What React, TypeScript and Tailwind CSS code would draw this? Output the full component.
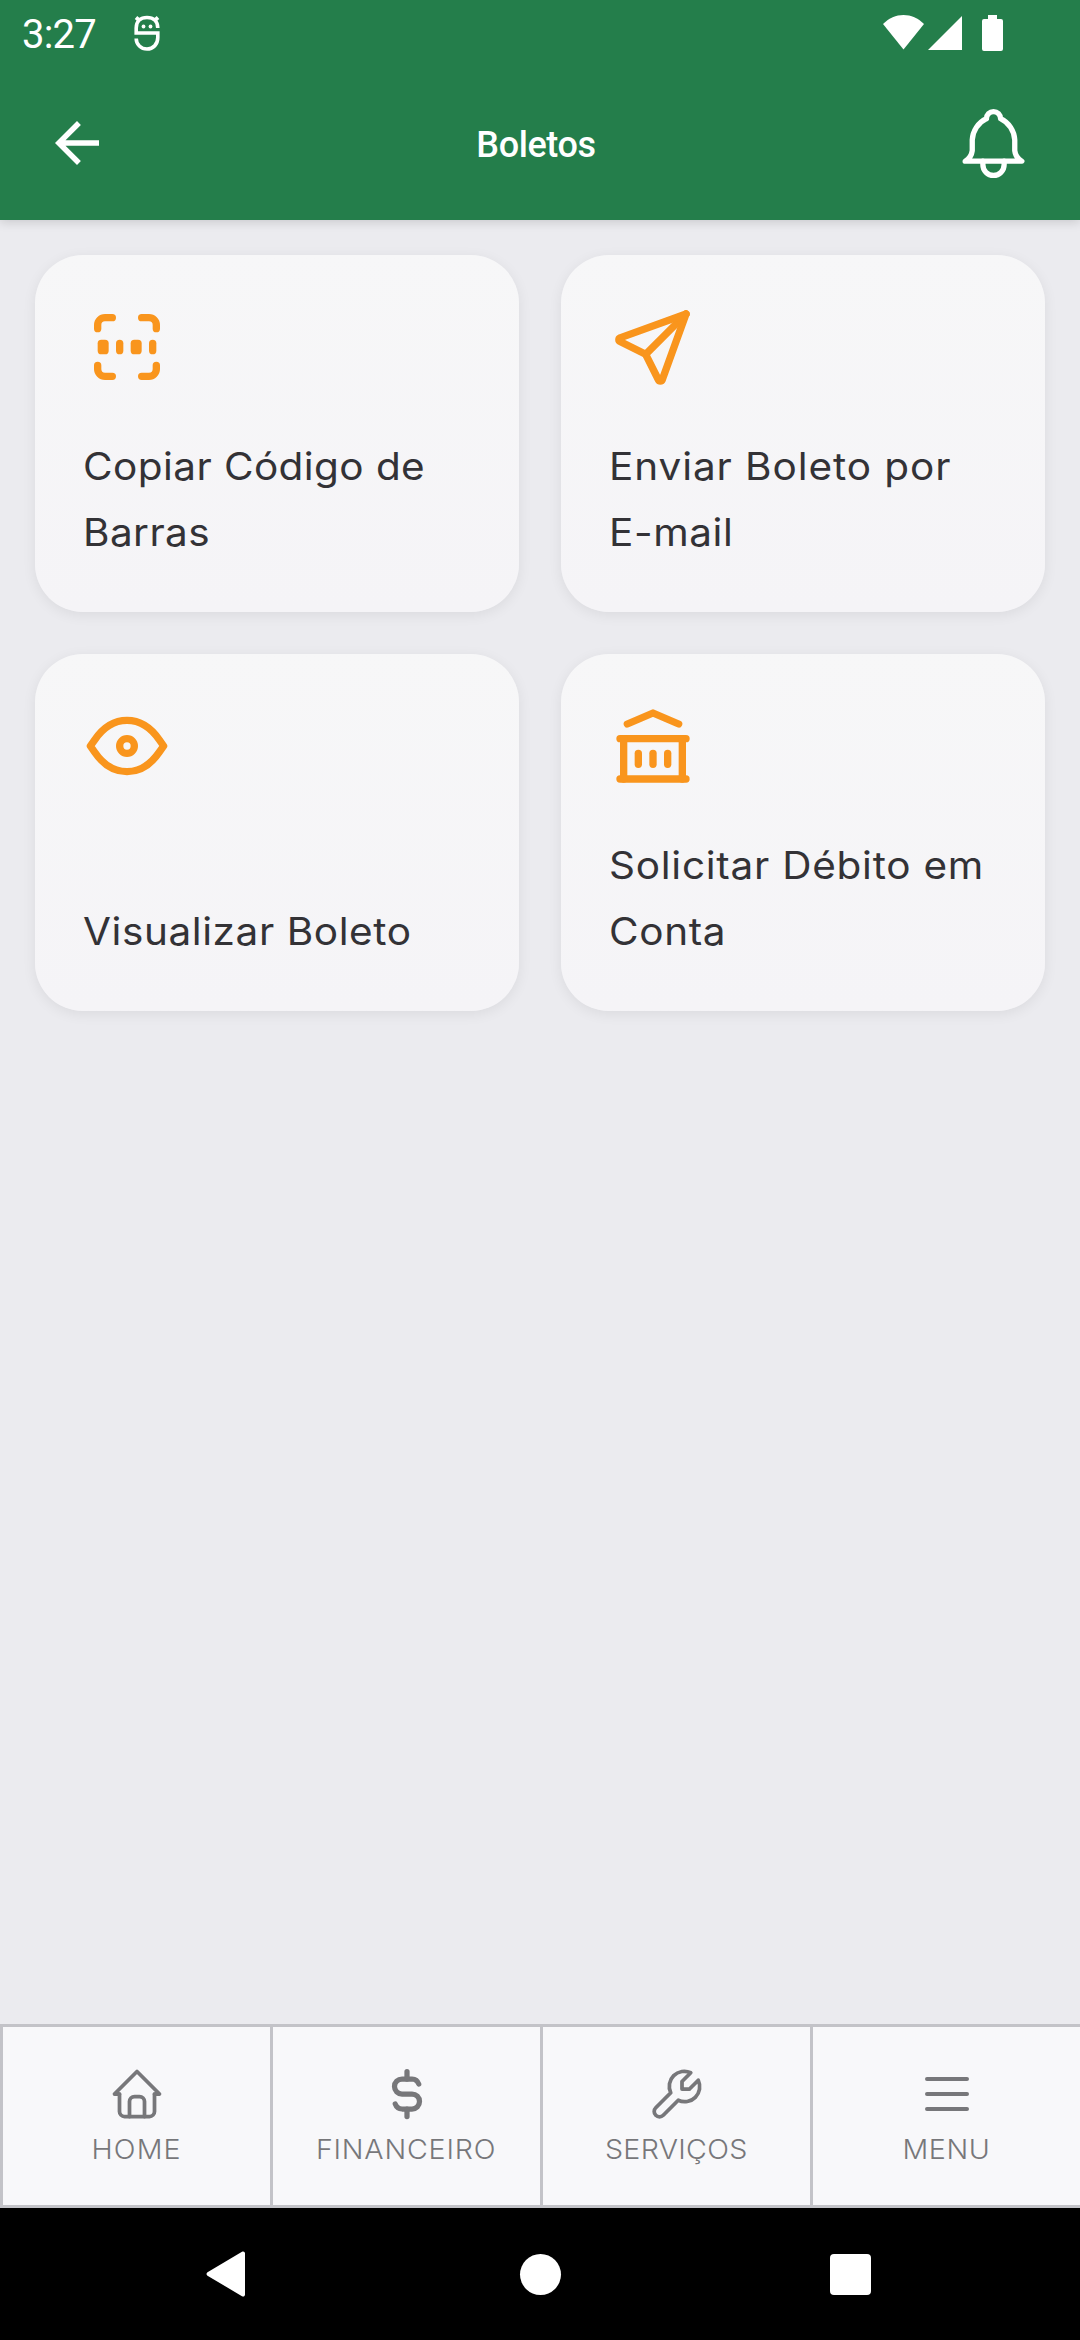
import React from 'react';

interface ICard {
    lines: { text: string; className: string }[];
    icon: React.ReactNode;
}

interface ITab {
    label: string;
    className: string;
    strokeWidth: number;
    icon: React.ReactNode;
}

const cards: ICard[] = [
    {
        lines: [
            { text: 'Copiar Código de', className: 'tracking-[0.4px]' },
            { text: 'Barras', className: 'tracking-[0.4px]' },
        ],
        icon: (
            <>
                <path d="M4 7V6a2 2 0 0 1 2-2h2" />
                <path d="M4 17v1a2 2 0 0 0 2 2h2" />
                <path d="M16 4h2a2 2 0 0 1 2 2v1" />
                <path d="M16 20h2a2 2 0 0 0 2-2v-1" />
                <path d="M5 11h1v2H5z" />
                <path d="M10 11v2" />
                <path d="M14 11h1v2h-1z" />
                <path d="M19 11v2" />
            </>
        ),
    },
    {
        lines: [
            { text: 'Enviar Boleto por', className: 'tracking-[0.85px]' },
            { text: 'E-mail', className: 'tracking-[0.55px]' },
        ],
        icon: (
            <>
                <path d="M10 14L21 3" />
                <path d="M21 3l-6.5 18a.55.55 0 0 1-1 0L10 14l-7-3.5a.55.55 0 0 1 0-1L21 3" />
            </>
        ),
    },
    {
        lines: [{ text: 'Visualizar Boleto', className: 'tracking-[0.55px]' }],
        icon: (
            <>
                <circle cx="12" cy="12" r="2" />
                <path d="M2 12l1.2-1.7C5.6 6.8 8.5 5 12 5s6.4 1.8 8.8 5.3L22 12l-1.2 1.7C18.4 17.2 15.5 19 12 19s-6.4-1.800-8.800-5.300z" />
            </>
        ),
    },
    {
        lines: [
            { text: 'Solicitar Débito em', className: 'tracking-[0.7px]' },
            { text: 'Conta', className: 'tracking-[0.6px]' },
        ],
        icon: (
            <>
                <path d="M3 21h18" />
                <path d="M3 10h18" />
                <path d="M5 6l7-3 7 3" />
                <path d="M4 10v11" />
                <path d="M20 10v11" />
                <path d="M8 14v3" />
                <path d="M12 14v3" />
                <path d="M16 14v3" />
            </>
        ),
    },
];

const tabs: ITab[] = [
    {
        label: 'HOME',
        className: 'tracking-[1.1px]',
        strokeWidth: 1.5,
        icon: (
            <>
                <path d="M5 12H3l9-9 9 9h-2" />
                <path d="M5 12v7a2 2 0 0 0 2 2h10a2 2 0 0 0 2-2v-7" />
                <path d="M9 21v-6a2 2 0 0 1 2-2h2a2 2 0 0 1 2 2v6" />
            </>
        ),
    },
    {
        label: 'FINANCEIRO',
        className: 'tracking-[0.75px]',
        strokeWidth: 2.1,
        icon: (
            <>
                <path d="M16.7 8A3 3 0 0 0 14 6h-4a3 3 0 0 0 0 6h4a3 3 0 0 1 0 6h-4a3 3 0 0 1-2.7-2" />
                <path d="M12 3v3m0 12v3" />
            </>
        ),
    },
    {
        label: 'SERVIÇOS',
        className: 'tracking-[0.3px]',
        strokeWidth: 1.5,
        icon: <path d="M17 10h-3V7l3.5-3.5a6 6 0 0 0-8 8l-6 6a2 2 0 0 0 3 3l6-6a6 6 0 0 0 8-8L17 10" />,
    },
    {
        label: 'MENU',
        className: 'tracking-[0.5px]',
        strokeWidth: 1.6,
        icon: <path d="M4 6h16M4 12h16M4 18h16" />,
    },
];

const StatusBar = () => (
    <div className="flex h-[66px] items-start justify-between pl-[22px] pr-[77px]">
        <div className="flex">
            <span className="w-[112px] pt-[11px] text-[40px] leading-[48px] tracking-[-0.8px]">3:27</span>
            <svg className="mt-[15px]" width="26" height="37" viewBox="0 0 26 37" fill="none" stroke="currentColor">
                <path d="M23.8 13C23.8 6.5 19.5 2.5 13 2.5S2.200 6.500 2.200 13v5h21.600v4.500C23.800 29.500 19 34 13 34S2.200 29.500 2.200 23.500" strokeWidth="3.6" />
                <path d="M2 2.5L6 6M24 2.5L20 6" strokeWidth="3.8" />
                <circle cx="9.5" cy="11.5" r="1.9" fill="currentColor" stroke="none" />
                <circle cx="16.5" cy="11.5" r="1.9" fill="currentColor" stroke="none" />
            </svg>
        </div>
        <div className="flex pt-[15px]">
            <svg width="41" height="35" viewBox="0 0 41 35" fill="currentColor">
                <path d="M0 9C6 3 13 0 20.5 0S35 3 41 9L20.5 34.5z" />
            </svg>
            <svg className="ml-1" width="34" height="35" viewBox="0 0 34 35" fill="currentColor">
                <path d="M34 1v34H0z" />
            </svg>
            <svg className="ml-5" width="21" height="36" viewBox="0 0 21 36" fill="currentColor">
                <path d="M6 0h9v4h4a2 2 0 0 1 2 2v28a2 2 0 0 1-2 2H2a2 2 0 0 1-2-2V6a2 2 0 0 1 2-2h4z" />
            </svg>
        </div>
    </div>
);

const Header = () => (
    <header className="relative h-[220px] bg-[#247e4b] font-[Roboto,sans-serif] text-white shadow-[0_2px_10px_rgba(0,0,0,0.15)]">
        <StatusBar />
        <div className="flex h-[154px] items-center justify-between px-11">
            <svg width="66" height="66" viewBox="0 0 24 24" fill="currentColor">
                <path d="M20 11H7.83l5.59-5.59L12 4l-8 8 8 8 1.41-1.41L7.83 13H20v-2z" />
            </svg>
            <h1 className="ml-[11px] pt-[4px] text-[36px] font-medium leading-[48px] tracking-[-0.4px]">Boletos</h1>
            <svg
                width="85"
                height="85"
                viewBox="0 0 24 24"
                fill="none"
                stroke="currentColor"
                strokeWidth="1.5"
                strokeLinecap="round"
                strokeLinejoin="round"
            >
                <path d="M10 5a2 2 0 0 1 4 0 7 7 0 0 1 4 6v3a4 4 0 0 0 2 3H4a4 4 0 0 0 2-3v-3a7 7 0 0 1 4-6" />
                <path d="M9 17v1a3 3 0 0 0 6 0v-1" />
            </svg>
        </div>
    </header>
);

const Card = ({ lines, icon }: ICard) => (
    <button className="flex h-[357px] flex-col justify-between rounded-[48px] bg-linear-to-b from-[#f7f7f8] to-[#f5f4f7] px-12 pb-[46px] pt-12 text-left shadow-[0_3px_14px_rgba(0,0,0,0.07)]">
        <svg
            width="88"
            height="88"
            viewBox="0 0 24 24"
            fill="none"
            stroke="#f9951d"
            strokeWidth="2"
            strokeLinecap="round"
            strokeLinejoin="round"
        >
            {icon}
        </svg>
        <span className="flex origin-left scale-x-108 flex-col text-[37.5px] leading-[66px] text-[#333236]">
            {lines.map((line, index) => (
                <span key={index} className={`whitespace-nowrap ${line.className}`}>
                    {line.text}
                </span>
            ))}
        </span>
    </button>
);

const TabBar = () => (
    <nav className="grid h-[184px] grid-cols-4 border-y-[3px] border-[#c3c3c8] bg-[#f8f8fa] text-[#77777a]">
        {tabs.map((tab) => (
            <button key={tab.label} className="flex flex-col items-center border-l-[3px] border-[#c3c3c8] pt-[37px]">
                <svg
                    width="60"
                    height="60"
                    viewBox="0 0 24 24"
                    fill="none"
                    stroke="currentColor"
                    strokeWidth={tab.strokeWidth}
                    strokeLinecap="round"
                    strokeLinejoin="round"
                >
                    {tab.icon}
                </svg>
                <span className={`mt-2 scale-x-106 text-[27px] font-light leading-[36px] ${tab.className}`}>
                    {tab.label}
                </span>
            </button>
        ))}
    </nav>
);

const SystemNav = () => (
    <div className="flex h-[132px] items-center justify-between bg-black pl-[206px] pr-[209px] text-white">
        <svg width="40" height="46" viewBox="0 0 40 46" fill="currentColor">
            <path d="M36 .8c1.5-.9 3 0 3 1.7v41c0 1.7-1.5 2.6-3 1.7L1.5 24.7c-1.3-.8-1.3-2.6 0-3.400z" />
        </svg>
        <div className="ml-[4px] size-[41px] rounded-full bg-white" />
        <div className="size-[41px] rounded-[4px] bg-white" />
    </div>
);

const App = () => {
    return (
        <div className="flex h-[2340px] w-[1080px] flex-col overflow-hidden bg-[#ebebef] font-[Inter,sans-serif]">
            <Header />
            <main className="grid flex-1 grid-cols-2 content-start gap-[42px] px-[35px] pt-[35px]">
                {cards.map((card) => (
                    <Card key={card.lines[0].text} {...card} />
                ))}
            </main>
            <TabBar />
            <SystemNav />
        </div>
    );
};

export default App;
